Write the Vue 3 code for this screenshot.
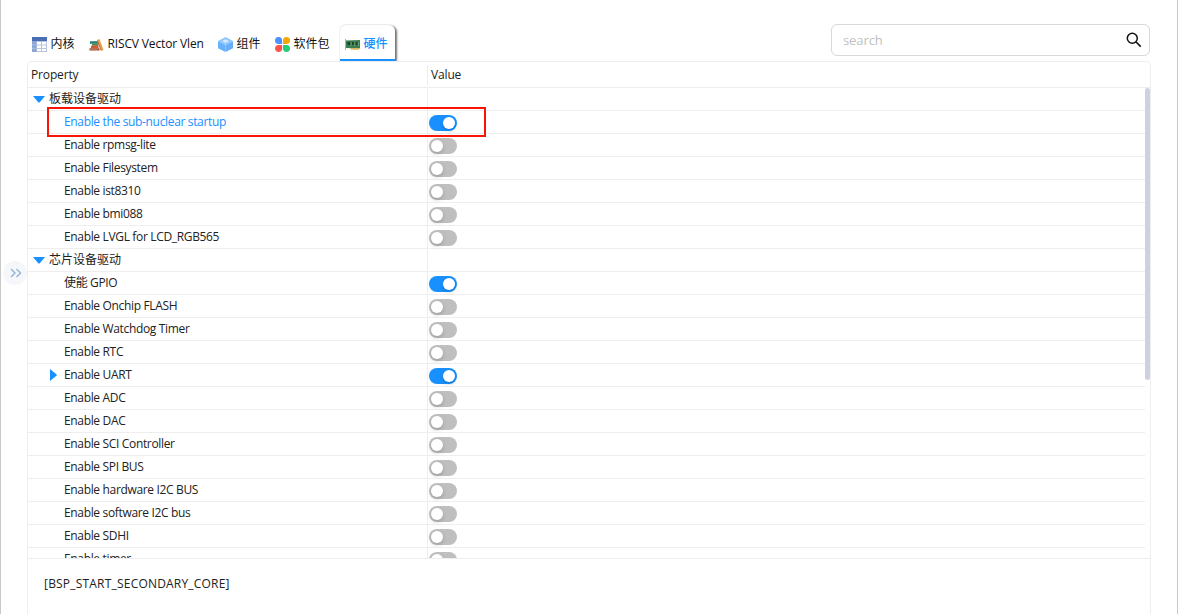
<script setup>
const tabs = [
  { id: 'kernel', label: '内核', icon: 'table' },
  { id: 'vlen', label: 'RISCV Vector Vlen', icon: 'books' },
  { id: 'component', label: '组件', icon: 'cube' },
  { id: 'package', label: '软件包', icon: 'petals' },
  { id: 'hardware', label: '硬件', icon: 'board' },
]

const rows = [
  { label: '板载设备驱动', group: true },
  { label: 'Enable the sub-nuclear startup', on: true, selected: true },
  { label: 'Enable rpmsg-lite' },
  { label: 'Enable Filesystem' },
  { label: 'Enable ist8310' },
  { label: 'Enable bmi088' },
  { label: 'Enable LVGL for LCD_RGB565' },
  { label: '芯片设备驱动', group: true },
  { label: '使能 GPIO', on: true },
  { label: 'Enable Onchip FLASH' },
  { label: 'Enable Watchdog Timer' },
  { label: 'Enable RTC' },
  { label: 'Enable UART', on: true, collapsed: true },
  { label: 'Enable ADC' },
  { label: 'Enable DAC' },
  { label: 'Enable SCI Controller' },
  { label: 'Enable SPI BUS' },
  { label: 'Enable hardware I2C BUS' },
  { label: 'Enable software I2C bus' },
  { label: 'Enable SDHI' },
  { label: 'Enable timer' },
]
</script>

<template>
  <div class="page">
    <aside class="rail">
      <button class="expand" aria-label="expand">
        <svg width="12" height="10" viewBox="0 0 12 10"><path d="M1 1l4 4-4 4M6.5 1l4 4-4 4" fill="none" stroke="#8fb4dc" stroke-width="1.4" /></svg>
      </button>
    </aside>

    <main class="content">
      <header class="top">
        <nav class="tabs">
          <div v-for="t in tabs" :key="t.id" class="tab" :class="[t.id, { active: t.id === 'hardware' }]">
            <svg v-if="t.icon === 'table'" class="icon" viewBox="0 0 15 15">
              <path d="M0 0h15v15H0z" fill="#b7c5df" /><path d="M0 0h15v4H0z" fill="#4a6eb3" />
              <path d="M0 4h4.5v11H0z" fill="#8da7d4" />
              <path d="M5 5h4v2.5H5zM10 5h4v2.5h-4zM5 8.5h4V11H5zM10 8.5h4V11h-4zM5 12h4v2H5zM10 12h4v2h-4z" fill="#fff" />
              <path d="M0 7.8h4.5M0 11.4h4.5" stroke="#b7c9e8" stroke-width=".7" />
            </svg>
            <svg v-else-if="t.icon === 'books'" class="icon" viewBox="0 0 15 15">
              <path d="M1 4.2h8v2.6H1z" fill="#23837c" /><path d="M3 6.6h6.5v2.2H3z" fill="#5e8550" />
              <path d="M2 8.7h7.5v2.6H2z" fill="#d15a37" /><path d="M.5 11.3h10v2.2H.5z" fill="#9a432b" />
              <path d="M1 12.4h8" stroke="#dba568" stroke-width=".6" />
              <path d="M7.8 3l2.6-1 4.2 11-2.6 1z" fill="#e9a34b" /><path d="M8.5 3.6l3.6 9.6" stroke="#be5e2d" stroke-width=".8" />
            </svg>
            <svg v-else-if="t.icon === 'cube'" class="icon" viewBox="0 0 15 15">
              <path d="M0 4l7.5 4v7L0 11.3z" fill="#67b1fb" /><path d="M15 4L7.5 8v7l7.5-3.7z" fill="#68adf8" />
              <path d="M7.5 0L15 4 7.5 8 0 4z" fill="#8cc6ff" /><path d="M7.5 2.2L11 4.1 7.5 6 4 4.1z" fill="#d8ecff" />
            </svg>
            <svg v-else-if="t.icon === 'petals'" class="icon" viewBox="0 0 15 15">
              <path d="M3.6 0A3.5 3.5 0 0 1 7.1 3.5v3.6H3.5A3.5 3.5 0 0 1 3.6 0z" fill="#4b91ff" />
              <path d="M11.5 0a3.5 3.5 0 0 1 0 7.1H8V3.5A3.5 3.5 0 0 1 11.5 0z" fill="#f5a705" />
              <path d="M3.5 7.9h3.6v3.6A3.5 3.5 0 1 1 3.5 7.9z" fill="#fb5549" />
              <path d="M8 7.9h3.5A3.5 3.5 0 1 1 8 11.5z" fill="#27cc78" />
            </svg>
            <svg v-else class="icon" viewBox="0 0 15 15">
              <path d="M.5 2v11" stroke="#a7afb2" stroke-width="1" /><path d="M1 3.5l14-.5v8.5L1 11z" fill="#3c7d50" />
              <path d="M2.5 5h3v3h-3zM7 5h2v3H7zM10.5 5h2v3h-2z" fill="#174729" />
              <path d="M6 5v4M9.7 5v4M13.5 5v4" stroke="#87b58f" stroke-width=".6" />
              <path d="M5 11h9v1.8H6z" fill="#d9b765" />
            </svg>
            <span>{{ t.label }}</span>
          </div>
        </nav>
        <div class="search">
          <input placeholder="search" />
          <svg width="16" height="16" viewBox="0 0 16 16"><circle cx="6.3" cy="6.2" r="5" fill="none" stroke="#111" stroke-width="1.5" /><path d="M9.9 9.8l4.8 4.8" stroke="#111" stroke-width="1.6" /></svg>
        </div>
      </header>

      <section class="panel">
        <div class="head">
          <div class="name">Property</div>
          <div class="val">Value</div>
        </div>
        <div class="body">
          <div class="rows">
            <div v-for="r in rows" :key="r.label" class="row" :class="{ group: r.group, selected: r.selected }">
              <div class="prop">
                <svg v-if="r.group" class="caret" width="12" height="7" viewBox="0 0 12 7"><path d="M0 0h12L6.8 6.2q-.8.7-1.6 0z" fill="#1890ff" /></svg>
                <svg v-if="r.collapsed" class="caret side" width="7" height="12" viewBox="0 0 7 12"><path d="M0 0l6.4 5.2q.7.8 0 1.6L0 12z" fill="#1890ff" /></svg>
                <span>{{ r.label }}</span>
              </div>
              <div class="cell"><i v-if="!r.group" class="switch" :class="{ on: r.on }"></i></div>
            </div>
          </div>
          <div class="scroll"><div class="thumb"></div></div>
          <div class="marker"></div>
        </div>
        <footer class="detail">[BSP_START_SECONDARY_CORE]</footer>
      </section>
    </main>
  </div>
</template>

<style>
body { margin: 0; background: #fff; }
</style>

<style scoped>
* { box-sizing: border-box; }
.page {
  display: flex; width: 1178px; height: 614px; overflow: hidden; background: #fff;
  border-left: 1px solid #c8c8c8; border-right: 1px solid #c8c8c8;
  font: 12px/16px "Open Sans", "Noto Sans CJK SC", sans-serif; color: #222;
}
.rail { width: 26px; flex: none; padding: 261px 0 0 2px; }
.expand {
  display: flex; align-items: center; justify-content: center; width: 24px; height: 24px;
  padding: 0 0 0 1px; border: 0; border-radius: 50%; background: #f5f7fa;
}
.content { width: 1124px; display: flex; flex-direction: column; }
.top { display: flex; justify-content: space-between; height: 61px; flex: none; padding-top: 24px; }
.tabs { display: flex; height: 37px; }
.tab { display: flex; height: 37px; padding: 12px 0 0 5px; color: #111; white-space: nowrap; }
.tab .icon { width: 15px; height: 15px; margin: 1px 3px 0 0; flex: none; }
.tab.kernel { width: 57px; }
.tab.vlen { width: 129px; letter-spacing: -.14px; }
.tab.component { width: 57px; }
.tab.package { width: 70px; }
.tab.active {
  width: 55px; height: 36px; margin-top: 1px; padding-top: 11px; color: #1890ff; background: #fff;
  border-bottom: 2px solid #1890ff; border-radius: 6px 6px 0 0;
  box-shadow: 2px 1px 2px #777, 0 0 2px #ccc; clip-path: inset(-2px -5px 0 -1px);
}
.tab.active span { font-weight: 500; }
.tab span { height: 16px; line-height: 15px; margin-left: .5px; }
.search {
  display: flex; justify-content: space-between; align-items: center; width: 319px; height: 32px;
  margin-right: 1px; padding: 0 7px 0 11px; border: 1px solid #d9d9d9; border-radius: 6px;
}
.search input { width: 200px; padding: 0; border: 0; outline: 0; font: 13px "Open Sans", sans-serif; letter-spacing: -.1px; }
.search input::placeholder { color: #bfbfbf; }
.panel { flex: 1; border: 1px solid #eee; border-bottom: 0; border-radius: 5px 5px 0 0; }
.head { display: flex; height: 26px; border-bottom: 1px solid #eee; line-height: 26px; font-weight: 500; letter-spacing: -.15px; color: #222; }
.head .name { width: 399px; padding-left: 3px; }
.head .val { height: 20px; margin-top: 3px; padding-left: 3px; border-left: 1px solid #eee; line-height: 20px; }
.body { position: relative; display: flex; height: 470px; overflow: hidden; }
.rows { width: 1117px; }
.row { display: flex; height: 23px; border-bottom: 1px solid #eee; }
.prop { width: 399px; display: flex; align-items: center; height: 22px; padding-left: 36px; white-space: pre; letter-spacing: -.34px; }
.group .prop { padding-left: 5px; letter-spacing: 0; }
.caret { flex: none; margin-right: 4px; }
.caret.side { margin: 0 7px 0 -14px; }
.selected .prop { color: #1890ff; }
.cell { flex: 1; border-left: 1px solid #eee; padding: 4px 0 0 1px; }
.switch { display: block; width: 28px; height: 16px; padding: 2px; border-radius: 8px; background: #bfbfbf; }
.switch::before { content: ""; display: block; width: 12px; height: 12px; border-radius: 50%; background: #fff; box-shadow: 0 2px 4px #00230b33; }
.switch.on { background: #1890ff; }
.switch.on::before { margin-left: 12px; }
.scroll { width: 5px; }
.thumb { height: 292px; border-radius: 3px; background: #cdd3de; }
.marker { position: absolute; left: 19px; top: 19px; width: 439px; height: 30px; border: 2px solid #fa1406; }
.detail { height: 56px; padding: 17px 16px; border-top: 1px solid #eee; letter-spacing: .2px; }
</style>
